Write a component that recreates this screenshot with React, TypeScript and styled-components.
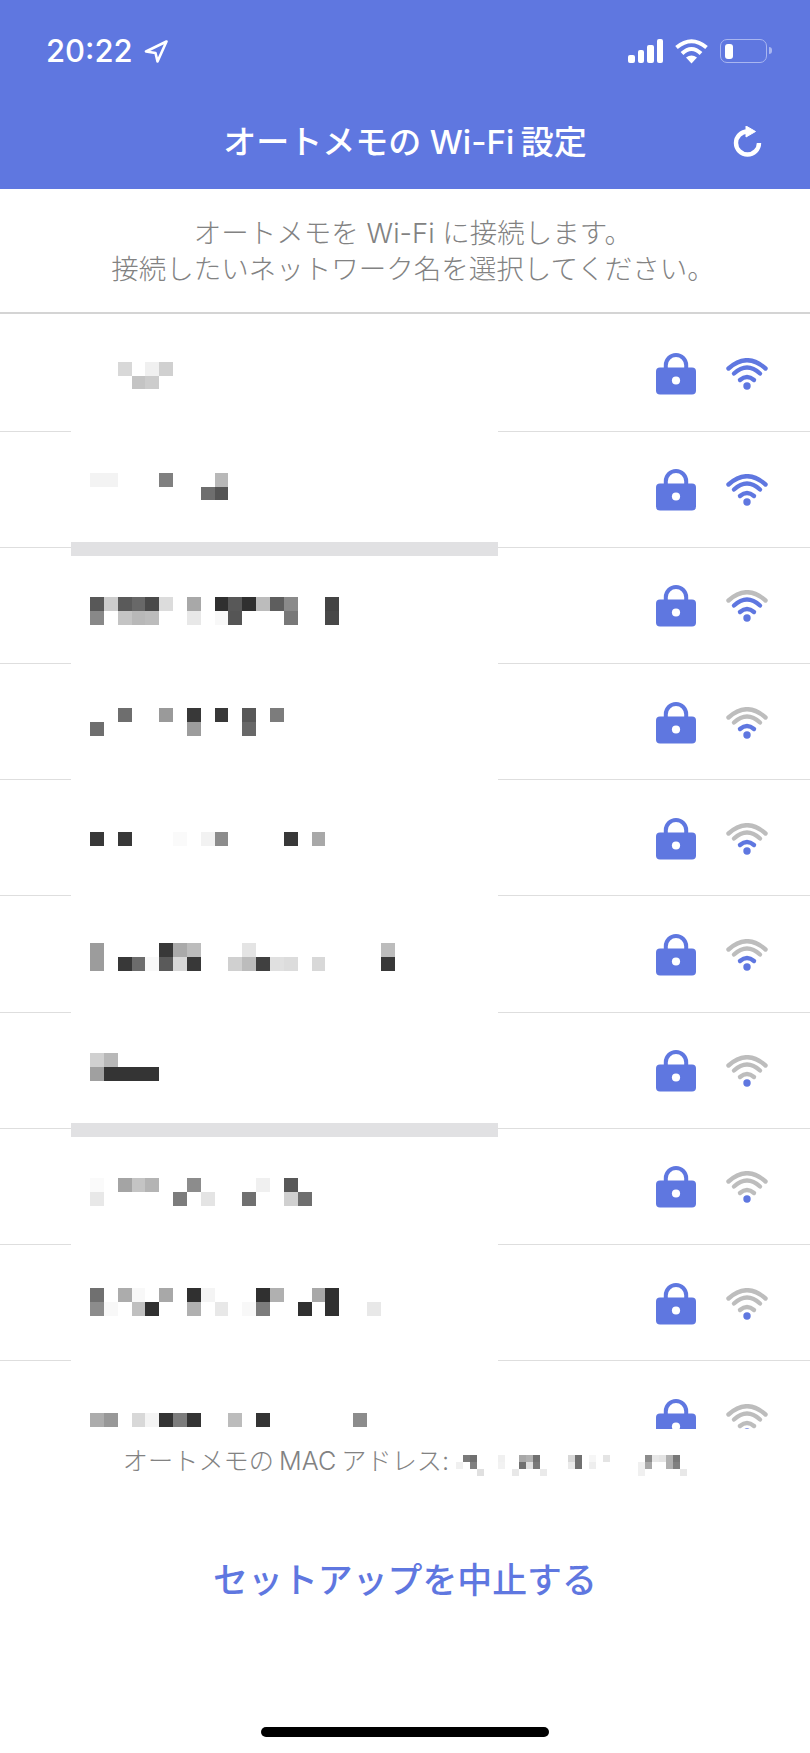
import { createGlobalStyle } from "styled-components";
import styled from "styled-components";

const BLUE = "#5f77e0";
const ARC_GRAY = "#bdbdbd";
const TEXT_GRAY = "#828282";

const GlobalStyle = createGlobalStyle`
  html, body {
    margin: 0;
    padding: 0;
    background: #fff;
  }
  * {
    box-sizing: border-box;
  }
`;

const Screen = styled.div`
  width: 810px;
  height: 1753px;
  overflow: hidden;
  display: flex;
  flex-direction: column;
  background: #fff;
  font-family: Inter, "Noto Sans CJK JP", sans-serif;
`;

const Header = styled.header`
  height: 189px;
  flex-shrink: 0;
  background: ${BLUE};
  color: #fff;
  display: flex;
  flex-direction: column;
`;

const StatusBar = styled.div`
  display: flex;
  align-items: center;
  justify-content: space-between;
  padding: 38px 43px 0 46px;
  height: 64px;
`;

const Clock = styled.div`
  display: flex;
  align-items: center;
  gap: 11px;
  font-size: 31px;
  font-weight: 500;
  line-height: 26px;
`;

const StatusIcons = styled.div`
  display: flex;
  align-items: center;
  gap: 12px;
`;

const SignalBars = styled.div`
  display: flex;
  align-items: flex-end;
  gap: 3px;
  height: 24px;
`;

const SignalBar = styled.span<{ $height: number }>`
  width: 6.5px;
  height: ${(p) => p.$height}px;
  border-radius: 2px;
  background: #fff;
`;

const Battery = styled.div`
  position: relative;
  width: 47px;
  height: 24px;
  padding: 3.5px;
  border: 1.5px solid #a9b6f0;
  border-radius: 7px;
  &::after {
    content: "";
    position: absolute;
    right: -6px;
    top: 7px;
    width: 3px;
    height: 7px;
    border-radius: 0 3px 3px 0;
    background: #a9b6f0;
  }
`;

const BatteryLevel = styled.div`
  width: 8px;
  height: 100%;
  border-radius: 3px;
  background: #fff;
`;

const TitleBar = styled.div`
  position: relative;
  flex: 1;
  display: flex;
  align-items: center;
  justify-content: center;
  padding-top: 31px;
`;

const Title = styled.h1`
  margin: 0;
  font-size: 33px;
  font-weight: 500;
  line-height: 40px;
  white-space: pre;
`;

// latin words sit between kana with a small gap, not a full space
const LatinWord = styled.span`
  margin: 0 0.2em;
`;

const TitleLatin = styled(LatinWord)`
  margin: 0 0.2em 0 0.26em;
`;

const RefreshButton = styled.div`
  position: absolute;
  right: 47px;
  top: 62px;
  line-height: 0;
`;

const Intro = styled.p`
  height: 123px;
  flex-shrink: 0;
  margin: 0;
  padding-left: 16px;
  display: flex;
  flex-direction: column;
  align-items: center;
  justify-content: center;
  font-size: 27.5px;
  font-weight: 300;
  line-height: 36px;
  color: ${TEXT_GRAY};
  white-space: pre;
`;

const NetworkList = styled.ul`
  height: 1117px;
  flex-shrink: 0;
  margin: 0;
  padding: 1.5px 0 0;
  list-style: none;
  overflow: hidden;
  border-top: 2px solid #d4d4d4;
`;

const NetworkRow = styled.li`
  height: 116.2px;
  display: flex;
  border-bottom: 1px solid #dedede;
`;

const NameMask = styled.div<{ $band: boolean; $offset: number }>`
  position: relative;
  width: 426.5px;
  margin: 0 0 -1px 71px;
  padding: ${(p) => p.$offset}px 0 0 19px;
  background: #fff;
  ${(p) =>
    p.$band &&
    `
    &::after {
      content: "";
      position: absolute;
      left: 0;
      right: 0;
      bottom: -8px;
      height: 14px;
      background: #e1e1e3;
      z-index: 1;
    }
  `}
`;

const Mosaic = styled.div`
  display: flex;
  flex-direction: column;
`;

const MosaicLine = styled.div`
  display: flex;
`;

const MosaicCell = styled.span<{ $shade: string; $size: number }>`
  flex-shrink: 0;
  width: ${(p) => p.$size}px;
  height: ${(p) => p.$size}px;
  background: ${(p) => p.$shade};
`;

const RowIcons = styled.div`
  margin-left: auto;
  padding: 2px 42px 0 0;
  display: flex;
  align-items: center;
  gap: 30px;
`;

const MacLine = styled.div`
  display: flex;
  align-items: flex-start;
  justify-content: center;
  height: 74px;
  padding-top: 16px;
  gap: 7px;
  font-size: 25.2px;
  font-weight: 300;
  line-height: 32px;
  color: ${TEXT_GRAY};
`;

const MacMosaic = styled(Mosaic)`
  margin-top: 10px;
`;

const CancelButton = styled.div`
  height: 149px;
  display: flex;
  align-items: center;
  justify-content: center;
  font-size: 34.9px;
  font-weight: 500;
  color: ${BLUE};
`;

const HomeBar = styled.div`
  align-self: center;
  width: 288px;
  height: 10px;
  margin-top: 75px;
  border-radius: 5px;
  background: #000;
`;

type Network = { offset: number; level: number; band?: boolean; lines: string[] };

// each token is a grey level for one mosaic square, ".." is blank
const networks: Network[] = [
  { offset: 46.2, level: 3, lines: [".. .. d8 .. f0 d0", ".. .. .. c4 cc"] },
  {
    offset: 41,
    level: 3,
    band: true,
    lines: ["f3 f3 .. .. .. 80 .. .. .. b8", ".. .. .. .. .. .. .. .. 6e 55"],
  },
  {
    offset: 49.6,
    level: 2,
    lines: [
      "58 cc 5a 68 4a dc .. a8 .. 30 58 30 bc 5e 8a .. .. 44",
      "88 .. c4 b8 bc .. .. e8 .. f8 55 .. .. .. 78 .. .. 48",
    ],
  },
  {
    offset: 44,
    level: 1,
    lines: [
      ".. .. 6e .. .. 9a .. 38 .. 38 .. 58 .. 7c",
      "6e .. .. .. .. .. .. 9c .. .. .. 68",
    ],
  },
  {
    offset: 52,
    level: 1,
    lines: ["38 .. 38 .. .. .. fa .. f2 8c .. .. .. .. 38 .. a8"],
  },
  {
    offset: 46.7,
    level: 1,
    lines: [
      "9c .. .. .. .. 38 aa bc .. .. .. e4 .. .. .. .. .. .. .. .. .. bc",
      "9c .. 38 6c f8 5a d8 38 .. .. d0 bc 40 e0 dc .. d8 .. .. .. .. 38",
    ],
  },
  {
    offset: 40.7,
    level: 0,
    band: true,
    lines: ["d0 b8", "a0 34 34 34 34"],
  },
  {
    offset: 49,
    level: 0,
    lines: [
      "fa .. a4 c4 b4 .. .. 8c .. .. .. .. f0 .. 58",
      "e8 .. .. .. .. .. 7c .. e4 .. .. 70 .. .. d0 6e",
    ],
  },
  {
    offset: 43.3,
    level: 0,
    lines: [
      "70 .. ac f8 .. a8 .. 30 f4 .. .. .. 30 b0 .. .. a8 30",
      "8c f8 .. c0 30 .. .. b0 .. e8 .. f8 7c .. .. 30 .. 30 .. .. e8",
    ],
  },
  {
    offset: 51.7,
    level: 0,
    lines: ["ac 98 .. d8 f4 34 7c 34 .. .. bc .. 34 .. .. .. .. .. .. 8c"],
  },
];

const macLines = [
  ".. 7a 70 .. .. .. f0 .. .. a8 b0 70 .. .. .. .. d8 70 .. f6 .. e4 .. .. .. .. .. 8c e8 e4 b0 78",
  "f0 .. 80 .. .. .. f2 .. .. 70 e0 78 .. .. .. .. ea 70 .. ee .. .. .. .. .. .. f0 a8 .. .. b0 80",
  ".. .. .. e0 .. .. .. .. e8 .. .. .. ea .. .. .. .. .. .. .. .. .. .. .. .. .. f0 .. .. .. .. .. e8",
];

function PixelBlock({ lines, size, as: Wrap = Mosaic }: { lines: string[]; size: number; as?: typeof Mosaic }) {
  return (
    <Wrap>
      {lines.map((line, i) => (
        <MosaicLine key={i}>
          {line.split(" ").map((tok, j) => (
            <MosaicCell key={j} $size={size} $shade={tok === ".." ? "transparent" : `#${tok}${tok}${tok}`} />
          ))}
        </MosaicLine>
      ))}
    </Wrap>
  );
}

function LockIcon() {
  return (
    <svg width="40" height="42" viewBox="0 0 40 42">
      <path d="M9.8 18V12.2a10.2 10.2 0 0 1 20.4 0v5.8" fill="none" stroke={BLUE} strokeWidth="4" />
      <rect x="0" y="14.5" width="40" height="27" rx="4" fill={BLUE} />
      <circle cx="20" cy="27.5" r="4.1" fill="#fff" />
    </svg>
  );
}

function SignalIcon({ level }: { level: number }) {
  const arc = (n: number) => (level >= n ? BLUE : ARC_GRAY);
  return (
    <svg width="42" height="32" viewBox="0 0 42 32" fill="none" strokeWidth="4.4" strokeLinecap="round">
      <path d="M2.5 10.5Q21 -6 39.5 10.5" stroke={arc(3)} />
      <path d="M8 15.5Q21 3.5 34 15.5" stroke={arc(2)} />
      <path d="M14 22Q21 16 28 22" stroke={arc(1)} />
      <circle cx="21" cy="28" r="3.7" fill={BLUE} />
    </svg>
  );
}

function NavArrow() {
  return (
    <svg width="24" height="23" viewBox="0 0 24 23" fill="none" stroke="#fff" strokeWidth="2.6" strokeLinejoin="round">
      <path d="M22.5 1.5L2 11.5l9.5 1.5 2 8.5z" />
    </svg>
  );
}

function StatusWifi() {
  return (
    <svg width="33" height="25" viewBox="0 0 33 25" fill="none" stroke="#fff" strokeWidth="4">
      <path d="M1.5 8.5Q16.5 -4 31.5 8.5" />
      <path d="M7 14.5Q16.5 5.5 26 14.5" />
      <path d="M16.5 24.5L11 18.5Q16.5 14.5 22 18.5z" fill="#fff" stroke="none" />
    </svg>
  );
}

function RefreshIcon() {
  return (
    <svg width="30" height="32" viewBox="0 0 30 32" fill="none">
      <path d="M14.5 5.5a11.5 11.5 0 1 0 11.5 11.5" stroke="#fff" strokeWidth="4.4" />
      <path d="M13 0l9.5 5.5L13 11z" fill="#fff" stroke="#fff" strokeWidth="1" strokeLinejoin="round" />
    </svg>
  );
}

export default function App() {
  return (
    <Screen>
      <GlobalStyle />
      <Header>
        <StatusBar>
          <Clock>
            20:22
            <NavArrow />
          </Clock>
          <StatusIcons>
            <SignalBars>
              <SignalBar $height={8} />
              <SignalBar $height={13} />
              <SignalBar $height={18} />
              <SignalBar $height={24} />
            </SignalBars>
            <StatusWifi />
            <Battery>
              <BatteryLevel />
            </Battery>
          </StatusIcons>
        </StatusBar>
        <TitleBar>
          <Title>
            オートメモの<TitleLatin>Wi-Fi</TitleLatin>設定
          </Title>
          <RefreshButton>
            <RefreshIcon />
          </RefreshButton>
        </TitleBar>
      </Header>
      <Intro>
        <span>オートメモを Wi-Fi に接続します。</span>
        <span>接続したいネットワーク名を選択してください。</span>
      </Intro>
      <NetworkList>
        {networks.map((net, i) => (
          <NetworkRow key={i}>
            <NameMask $band={!!net.band} $offset={net.offset}>
              <PixelBlock lines={net.lines} size={13.85} />
            </NameMask>
            <RowIcons>
              <LockIcon />
              <SignalIcon level={net.level} />
            </RowIcons>
          </NetworkRow>
        ))}
      </NetworkList>
      <MacLine>
        <span>
          オートメモの<LatinWord>MAC</LatinWord>アドレス:
        </span>
        <PixelBlock lines={macLines} size={7} as={MacMosaic} />
      </MacLine>
      <CancelButton>セットアップを中止する</CancelButton>
      <HomeBar />
    </Screen>
  );
}
